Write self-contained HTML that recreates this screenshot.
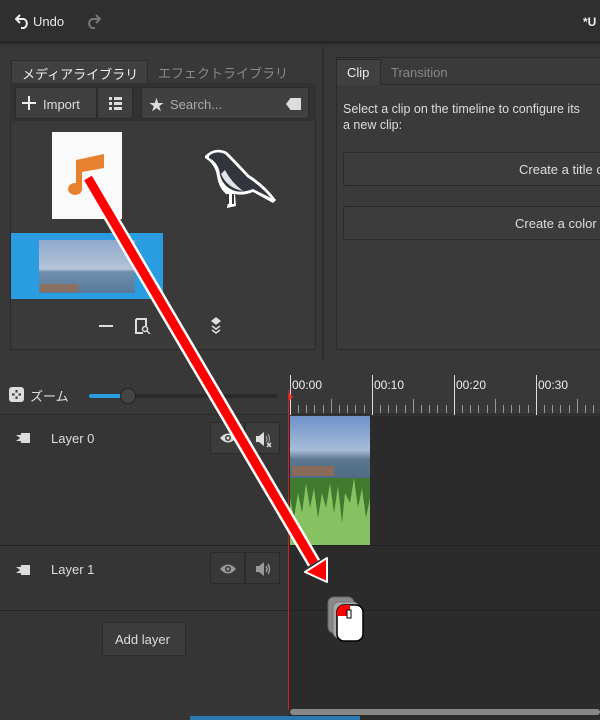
<!DOCTYPE html>
<html><head><meta charset="utf-8"><style>
*{margin:0;padding:0;box-sizing:border-box}
body{width:600px;height:720px;overflow:hidden;background:#353535;font-family:"Liberation Sans","Noto Sans CJK JP",sans-serif;color:#ddd;font-size:13px;position:relative}
.a{position:absolute}
.btn{position:absolute;background:#3d3d3d;border:1px solid #2a2a2a;border-radius:2px}
</style></head><body>
<div class="a" style="left:0;top:0;width:600px;height:44px;background:#2f2f2f;border-bottom:3px solid #262626"></div>
<svg class="a" style="left:15px;top:13px" width="16" height="16" viewBox="0 0 16 16"><path d="M5 2 L1 6 L5 10 M1 6 H9 A5 5 0 0 1 9 15 H6" stroke="#eee" stroke-width="2" fill="none"/></svg>
<div class="a" style="left:33px;top:14px;font-size:13px;color:#e8e8e8">Undo</div>
<svg class="a" style="left:85px;top:13px" width="16" height="16" viewBox="0 0 16 16"><path d="M11 2 L15 6 L11 10 M15 6 H7 A5 5 0 0 0 7 15 H10" stroke="#777" stroke-width="2" fill="none"/></svg>
<div class="a" style="left:583px;top:15px;font-weight:bold;font-size:12px;color:#eee">*U</div>
<div class="a" style="left:0;top:47px;width:600px;height:313px;background:#383838"></div>
<div class="a" style="left:322px;top:47px;width:2px;height:313px;background:#2e2e2e"></div>
<div class="a" style="left:11px;top:60px;width:137px;height:24px;background:#404040;border:1px solid #2a2a2a;border-bottom:none;font-size:13px;color:#eee;padding:3px 0 0 10px">メディアライブラリ</div>
<div class="a" style="left:158px;top:63px;font-size:13px;color:#8a8a8a">エフェクトライブラリ</div>
<div class="a" style="left:10px;top:83px;width:306px;height:267px;background:#3a3a3a;border:1px solid #2a2a2a"></div>
<div class="a" style="left:10px;top:83px;width:306px;height:38px;background:#323232"></div>
<div class="btn" style="left:15px;top:87px;width:82px;height:32px;background:#3f3f3f"><svg class="a" style="left:6px;top:8px" width="14" height="14"><path d="M7 0V14M0 7H14" stroke="#eee" stroke-width="2"/></svg><span class="a" style="left:27px;top:9px;color:#ddd">Import</span></div>
<div class="btn" style="left:97px;top:87px;width:36px;height:32px;background:#3f3f3f"><svg class="a" style="left:11px;top:9px" width="13" height="13"><g fill="#ddd"><rect x="0" y="0" width="3" height="3"/><rect x="0" y="5" width="3" height="3"/><rect x="0" y="10" width="3" height="3"/><rect x="5" y="0" width="8" height="3"/><rect x="5" y="5" width="8" height="3"/><rect x="5" y="10" width="8" height="3"/></g></svg></div>
<div class="btn" style="left:141px;top:87px;width:168px;height:32px;background:#404040"><span class="a" style="left:7px;top:6px;font-size:15px;color:#ddd">&#9733;</span><span class="a" style="left:28px;top:9px;color:#aaa">Search...</span><span class="a" style="left:144px;top:10px;width:15px;height:12px;background:#ddd;clip-path:polygon(30% 0,100% 0,100% 100%,30% 100%,0 50%)"></span></div>
<div class="a" style="left:52px;top:132px;width:70px;height:87px;background:#fafafa"></div>
<svg class="a" style="left:60px;top:150px" width="50" height="50" viewBox="0 0 50 50"><path d="M16 10 L44 4 L44 18 L22 22 L22 38 A7 6 0 1 1 16 33 Z" fill="#e8812f"/></svg>
<svg class="a" style="left:203px;top:148px" width="76" height="62" viewBox="0 0 76 62"><path d="M2 8 Q12 -2 24 4 Q34 14 46 27 Q62 37 73 52 L70 55 L50 44 Q40 48 32 46 L33 58 L24 60 L26 48 Q16 42 14 28 Q12 16 2 10Z" fill="#fff"/><path d="M6 8 Q13 2 22 6 Q31 15 44 29 Q59 39 68 50 L50 41 Q40 45 32 43 Q20 39 17 27 Q16 15 6 10Z" fill="#33353d"/><path d="M18 26 Q24 40 40 43 Q28 34 22 22Z" fill="#e2e2ea"/><path d="M25 46 L25 56 M30 46 L30 56" stroke="#33353d" stroke-width="2"/></svg>
<div class="a" style="left:11px;top:233px;width:152px;height:66px;background:#2a9de0"></div>
<div class="a" style="left:39px;top:240px;width:96px;height:53px;background:linear-gradient(#8fa9cc,#b5c4d8 55%,#6f8fae 60%,#5a7a9a)"></div>
<div class="a" style="left:40px;top:284px;width:38px;height:8px;background:#8a7060"></div>
<div class="a" style="left:99px;top:325px;width:14px;height:2px;background:#ddd"></div>
<svg class="a" style="left:135px;top:318px" width="16" height="16"><path d="M1 1H11V8 M1 1V15H8" stroke="#ddd" stroke-width="2" fill="none"/><circle cx="10" cy="11" r="2.5" stroke="#ddd" stroke-width="1.5" fill="none"/><path d="M12 13L15 16" stroke="#ddd" stroke-width="1.5"/></svg>
<svg class="a" style="left:210px;top:317px" width="12" height="18"><path d="M6 0L11 4L6 8L1 4Z" fill="#ddd"/><path d="M2 9L6 12L10 9M2 13L6 16L10 13" stroke="#ddd" stroke-width="1.5" fill="none"/></svg>
<div class="a" style="left:336px;top:57px;width:270px;height:293px;background:#3a3a3a;border:1px solid #2a2a2a"></div>
<div class="a" style="left:336px;top:59px;width:45px;height:26px;background:#404040;border:1px solid #2a2a2a;border-bottom:none;padding:5px 0 0 10px;color:#eee">Clip</div>
<div class="a" style="left:381px;top:84px;width:220px;height:1px;background:#2a2a2a"></div>
<div class="a" style="left:391px;top:65px;color:#888">Transition</div>
<div class="a" style="left:343px;top:101px;width:300px;color:#ddd;font-size:12.5px;line-height:16px">Select a clip on the timeline to configure its<br>a new clip:</div>
<div class="btn" style="left:343px;top:152px;width:270px;height:34px;background:#3c3c3c"><span class="a" style="left:175px;top:9px;color:#ddd;white-space:nowrap">Create a title c</span></div>
<div class="btn" style="left:343px;top:206px;width:270px;height:34px;background:#3c3c3c"><span class="a" style="left:171px;top:9px;color:#ddd;white-space:nowrap">Create a color</span></div>
<div class="a" style="left:0;top:360px;width:600px;height:55px;background:#383838;border-bottom:1px solid #2a2a2a"></div>
<svg class="a" style="left:9px;top:387px" width="15" height="15"><rect x="0" y="0" width="15" height="15" rx="3" fill="#ddd"/><path d="M7.5 3V12M3 7.5H12" stroke="#383838" stroke-width="2"/><circle cx="7.5" cy="7.5" r="2" fill="#ddd"/></svg>
<div class="a" style="left:30px;top:386px;color:#ddd">ズーム</div>
<div class="a" style="left:89px;top:394px;width:188px;height:4px;background:#2a2a2a;border-radius:2px"></div>
<div class="a" style="left:89px;top:394px;width:40px;height:4px;background:#2a9de0;border-radius:2px"></div>
<div class="a" style="left:120px;top:388px;width:16px;height:16px;background:#444;border:1px solid #222;border-radius:50%"></div>
<svg class="a" style="left:288px;top:375px" width="312" height="40">
<g stroke="#ddd" stroke-width="1"><line x1="2.5" y1="0" x2="2.5" y2="40"/><line x1="84.5" y1="0" x2="84.5" y2="40"/><line x1="166.5" y1="0" x2="166.5" y2="40"/><line x1="248.5" y1="0" x2="248.5" y2="40"/></g>
<g stroke="#999">
<path d="M10.5 30V38M18.5 30V38M26.5 30V38M35.5 30V38M43.5 24V38M51.5 30V38M59.5 30V38M67.5 30V38M76.5 30V38M92.5 30V38M100.5 30V38M108.5 30V38M117.5 30V38M125.5 24V38M133.5 30V38M141.5 30V38M149.5 30V38M158.5 30V38M174.5 30V38M182.5 30V38M190.5 30V38M199.5 30V38M207.5 24V38M215.5 30V38M223.5 30V38M231.5 30V38M240.5 30V38M256.5 30V38M264.5 30V38M272.5 30V38M281.5 30V38M289.5 24V38M297.5 30V38M305.5 30V38"/></g>
<g fill="#eee" font-size="12" font-family="Liberation Sans"><text x="4" y="14">00:00</text><text x="86" y="14">00:10</text><text x="168" y="14">00:20</text><text x="250" y="14">00:30</text></g>
<path d="M1 18 L5 22 L1 26Z" fill="#e33"/>
</svg>
<div class="a" style="left:289px;top:416px;width:311px;height:304px;background:#2b2b2b"></div>
<div class="a" style="left:0;top:545px;width:600px;height:1px;background:#222"></div>
<div class="a" style="left:0;top:610px;width:600px;height:1px;background:#222"></div>
<div class="a" style="left:288px;top:390px;width:1px;height:320px;background:#d02020"></div>
<div class="a" style="left:16px;top:433px;width:14px;height:10px;background:#ddd;clip-path:polygon(0 20%,30% 50%,0 80%,35% 80%,35% 0,100% 0,100% 100%,35% 100%,35% 20%)"></div>
<div class="a" style="left:51px;top:431px;color:#ddd">Layer 0</div>
<div class="btn" style="left:210px;top:422px;width:35px;height:32px;background:#3c3c3c"><svg class="a" style="left:8px;top:9px" width="18" height="12"><path d="M1 6Q9 -3 17 6Q9 15 1 6Z" fill="#ddd"/><circle cx="9" cy="6" r="3" fill="#3c3c3c"/><circle cx="9" cy="6" r="1.5" fill="#ddd"/></svg></div>
<div class="btn" style="left:245px;top:422px;width:35px;height:32px;background:#3c3c3c"><svg class="a" style="left:9px;top:7px" width="18" height="18"><path d="M1 6H4L9 2V16L4 12H1Z" fill="#ddd"/><path d="M11 6Q13 9 11 12M13 4Q16 9 13 14" stroke="#999" stroke-width="1.2" fill="none"/><path d="M12 13L16 17M16 13L12 17" stroke="#ddd" stroke-width="1.5"/></svg></div>
<div class="a" style="left:16px;top:565px;width:14px;height:10px;background:#ddd;clip-path:polygon(0 20%,30% 50%,0 80%,35% 80%,35% 0,100% 0,100% 100%,35% 100%,35% 20%)"></div>
<div class="a" style="left:51px;top:562px;color:#ddd">Layer 1</div>
<div class="btn" style="left:210px;top:552px;width:35px;height:32px;background:#383838"><svg class="a" style="left:8px;top:10px" width="18" height="12"><path d="M1 6Q9 -3 17 6Q9 15 1 6Z" fill="#999"/><circle cx="9" cy="6" r="3" fill="#383838"/><circle cx="9" cy="6" r="1.5" fill="#999"/></svg></div>
<div class="btn" style="left:245px;top:552px;width:35px;height:32px;background:#383838"><svg class="a" style="left:9px;top:7px" width="18" height="18"><path d="M1 6H4L9 2V16L4 12H1Z" fill="#999"/><path d="M11 6Q13 9 11 12M13 4Q16 9 13 14" stroke="#999" stroke-width="1.5" fill="none"/></svg></div>
<div class="btn" style="left:102px;top:622px;width:84px;height:34px;background:#3c3c3c"><span class="a" style="left:12px;top:9px;color:#ddd">Add layer</span></div>
<div class="a" style="left:290px;top:416px;width:80px;height:62px;background:linear-gradient(#6f92c8,#a7bcd8 55%,#5c7890 70%,#4e6a84)"></div>
<div class="a" style="left:292px;top:466px;width:42px;height:10px;background:#8a6a58"></div>
<svg class="a" style="left:290px;top:478px" width="80" height="67"><rect width="80" height="67" fill="#86c262"/><path d="M0 0H80V20L76 40 72 10 68 30 64 0 60 25 55 15 52 45 48 8 44 35 40 5 36 30 32 15 28 40 24 10 20 30 16 5 12 35 8 15 4 40 0 20Z" fill="#3f7a2e"/></svg>
<div class="a" style="left:290px;top:709px;width:310px;height:6px;background:#888;border-radius:3px"></div>
<div class="a" style="left:190px;top:716px;width:170px;height:4px;background:#2a7ab0"></div>
<svg class="a" style="left:0;top:0" width="600" height="720">
<path d="M88 178 L314 563" stroke="#fff" stroke-width="14" fill="none"/>
<path d="M88 178 L314 563" stroke="#f00" stroke-width="9" fill="none"/>
<path d="M305 572 L327 558 L327 582Z" fill="#f00" stroke="#fff" stroke-width="2" stroke-linejoin="round"/>
<rect x="328" y="597" width="26" height="36" rx="6" fill="#888" stroke="#666"/>
<rect x="333" y="602" width="26" height="36" rx="6" fill="#aaa" stroke="#777"/>
<rect x="337" y="605" width="26" height="36" rx="7" fill="#fff" stroke="#000" stroke-width="1.5"/>
<path d="M344 605 h6 v11 h-13 v-4 a7 7 0 0 1 7 -7Z" fill="#f00"/>
<rect x="347" y="610" width="4" height="8" fill="#fff" stroke="#000"/>
</svg>
</body></html>
